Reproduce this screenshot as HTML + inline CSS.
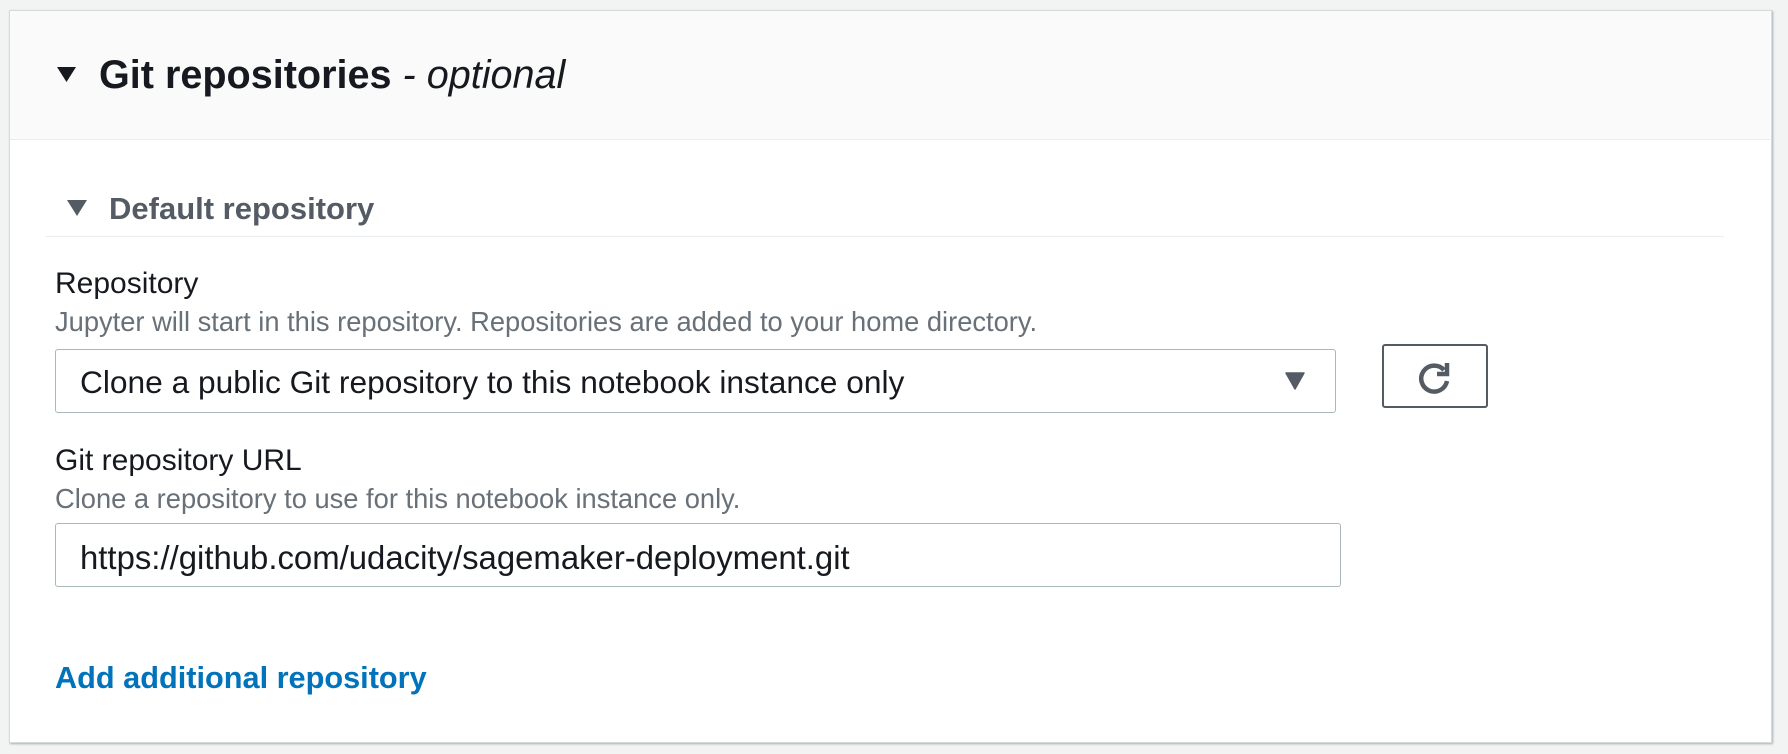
<!DOCTYPE html><html><head><style>
body{margin:0;width:1788px;height:754px;background:#f2f3f3;font-family:"Liberation Sans",sans-serif;position:relative;overflow:hidden}
.card{position:absolute;left:9px;top:10px;width:1761px;height:731px;background:#fff;border:1px solid #d5dbdb;box-shadow:1px 1px 2px rgba(0,28,36,.3)}
.hdr{position:absolute;left:10px;top:11px;width:1760px;height:128px;background:#fafafa;border-bottom:1px solid #eaeded}
.a{position:absolute;white-space:nowrap;line-height:40px}
.box{position:absolute;border:1px solid #aab7b8;border-radius:3px;background:#fff}
</style></head><body>
<div class="card"></div>
<div class="hdr"></div>
<svg class="a" style="left:57px;top:66px" width="20" height="17"><path d="M0 1H19L9.5 16Z" fill="#16191f"/></svg>
<div class="a" style="left:99px;top:55px;font-size:39.6px;font-weight:bold;color:#16191f">Git repositories <span style="font-weight:normal;font-style:italic">- optional</span></div>
<svg class="a" style="left:67px;top:199px" width="21" height="18"><path d="M0 1H20L10 17Z" fill="#545b64"/></svg>
<div class="a" style="left:109px;top:189px;font-size:31px;font-weight:bold;color:#545b64">Default repository</div>
<div class="a" style="left:46px;top:236px;width:1678px;border-top:1px solid #eaeded;height:0"></div>
<div class="a" style="left:55px;top:264px;font-size:30px;color:#16191f">Repository</div>
<div class="a" style="left:55px;top:302px;font-size:27.3px;color:#687078">Jupyter will start in this repository. Repositories are added to your home directory.</div>
<div class="box" style="left:55px;top:349px;width:1279px;height:62px"></div>
<div class="a" style="left:80px;top:362px;font-size:31.7px;color:#16191f">Clone a public Git repository to this notebook instance only</div>
<svg class="a" style="left:1285px;top:372px" width="20" height="18"><path d="M1 1H19L10 17Z" fill="#545b64" stroke="#545b64" stroke-linejoin="round" stroke-width="1.5"/></svg>
<div class="a" style="left:1382px;top:344px;width:102px;height:60px;border:2px solid #545b64;border-radius:3px;line-height:normal"></div>
<svg class="a" style="left:1415px;top:358px" width="40" height="40"><path d="M29 12A13 13 0 1 0 32 23" fill="none" stroke="#545b64" stroke-width="4.5"/><path d="M22 16H32V5" fill="none" stroke="#545b64" stroke-width="4.5"/></svg>
<div class="a" style="left:55px;top:441px;font-size:30px;color:#16191f">Git repository URL</div>
<div class="a" style="left:55px;top:479px;font-size:27.3px;color:#687078">Clone a repository to use for this notebook instance only.</div>
<div class="box" style="left:55px;top:523px;width:1284px;height:62px"></div>
<div class="a" style="left:80px;top:538px;font-size:32.9px;color:#16191f">https://github.com/udacity/sagemaker-deployment.git</div>
<div class="a" style="left:55px;top:658px;font-size:30.7px;font-weight:bold;color:#0073bb">Add additional repository</div>
</body></html>
